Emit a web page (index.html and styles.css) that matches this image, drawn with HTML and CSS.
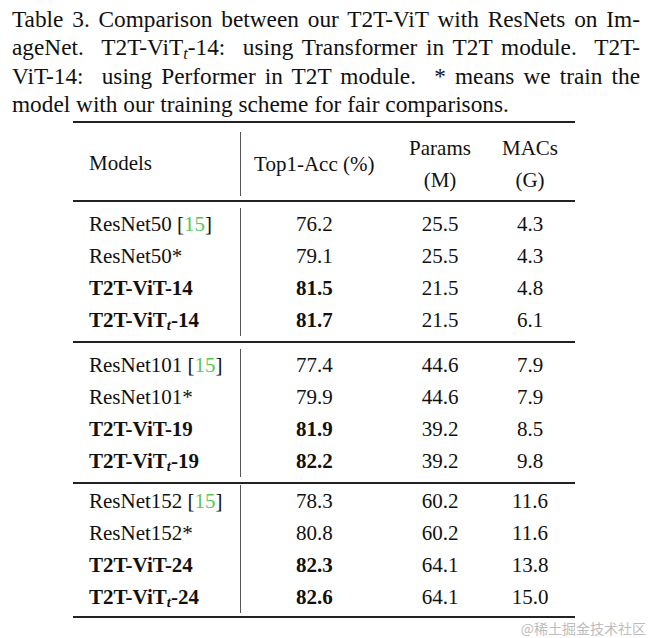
FILE: index.html
```html
<html>

<head>
	<title>Table 3</title>

	<link rel="stylesheet" href="styles.css">
</head>

<body>
	<div class="caption">
		<div class="line">Table 3. Comparison between our T2T-ViT with ResNets on Im-</div>
		<div class="line">ageNet. &nbsp;T2T-ViT<sub><i>t</i></sub>-14: &nbsp;using Transformer in T2T module. &nbsp;T2T-</div>
		<div class="line">ViT-14: &nbsp;using Performer in T2T module. &nbsp;* means we train the</div>
		<div class="line last">model with our training scheme for fair comparisons.</div>
	</div>

	<table class="results">
		<colgroup>
			<col class="c-model">
			<col class="c-acc">
			<col class="c-params">
			<col class="c-macs">
		</colgroup>
		<thead>
			<tr class="gap head-top"><td class="name"></td><td></td><td></td><td></td></tr>
			<tr class="head">
				<td class="name">Models</td>
				<td>Top1-Acc (%)</td>
				<td>Params<br>(M)</td>
				<td>MACs<br>(G)</td>
			</tr>
			<tr class="gap head-bottom"><td class="name"></td><td></td><td></td><td></td></tr>
		</thead>
		<tbody>
			<tr class="gap top"><td class="name"></td><td></td><td></td><td></td></tr>
			<tr><td class="name">ResNet50 [<span class="cite">15</span>]</td><td>76.2</td><td>25.5</td><td>4.3</td></tr>
			<tr><td class="name">ResNet50*</td><td>79.1</td><td>25.5</td><td>4.3</td></tr>
			<tr class="bold"><td class="name">T2T-ViT-14</td><td>81.5</td><td>21.5</td><td>4.8</td></tr>
			<tr class="bold"><td class="name">T2T-ViT<sub><i>t</i></sub>-14</td><td>81.7</td><td>21.5</td><td>6.1</td></tr>
			<tr class="gap bottom"><td class="name"></td><td></td><td></td><td></td></tr>
		</tbody>
		<tbody>
			<tr class="gap top"><td class="name"></td><td></td><td></td><td></td></tr>
			<tr><td class="name">ResNet101 [<span class="cite">15</span>]</td><td>77.4</td><td>44.6</td><td>7.9</td></tr>
			<tr><td class="name">ResNet101*</td><td>79.9</td><td>44.6</td><td>7.9</td></tr>
			<tr class="bold"><td class="name">T2T-ViT-19</td><td>81.9</td><td>39.2</td><td>8.5</td></tr>
			<tr class="bold"><td class="name">T2T-ViT<sub><i>t</i></sub>-19</td><td>82.2</td><td>39.2</td><td>9.8</td></tr>
			<tr class="gap bottom"><td class="name"></td><td></td><td></td><td></td></tr>
		</tbody>
		<tbody>
			<tr class="gap thin"><td class="name"></td><td></td><td></td><td></td></tr>
			<tr><td class="name">ResNet152 [<span class="cite">15</span>]</td><td>78.3</td><td>60.2</td><td>11.6</td></tr>
			<tr><td class="name">ResNet152*</td><td>80.8</td><td>60.2</td><td>11.6</td></tr>
			<tr class="bold"><td class="name">T2T-ViT-24</td><td>82.3</td><td>64.1</td><td>13.8</td></tr>
			<tr class="bold"><td class="name">T2T-ViT<sub><i>t</i></sub>-24</td><td>82.6</td><td>64.1</td><td>15.0</td></tr>
			<tr class="gap thin-bottom"><td class="name"></td><td></td><td></td><td></td></tr>
		</tbody>
	</table>

	<div class="mark">@稀土掘金技术社区</div>
</body>

</html>
```

FILE: styles.css
```css
body {
	margin: 0;
	background-color: #ffffff;
	color: #111111;
	font-family: "Liberation Serif", "Times New Roman", serif;
}

.caption {
	padding: 5px 12px 0 12px;
	font-size: 23.3px;
	line-height: 28.3px;
}

.line {
	text-align: justify;
	text-align-last: justify;
	white-space: nowrap;
}

.line.last {
	text-align: left;
	text-align-last: left;
}

sub {
	font-size: 0.7em;
	vertical-align: -0.22em;
	line-height: 0;
}

.results {
	border-collapse: collapse;
	table-layout: fixed;
	width: 502px;
	margin: 3px 0 0 73px;
	font-size: 21px;
	border-bottom: 2px solid #222222;
}

.results thead,
.results tbody {
	border-top: 2px solid #222222;
}

.c-model { width: 167px; }
.c-acc { width: 148px; }
.c-params { width: 104px; }
.c-macs { width: 83px; }

.results td {
	padding: 0;
	height: 32px;
	line-height: 32px;
	text-align: center;
	vertical-align: middle;
}

.results td.name {
	text-align: left;
	padding-left: 16px;
	border-right: 1px solid #555555;
}

.results td:last-child {
	padding-right: 7px;
}

.results .head td {
	height: 62px;
	line-height: 32px;
}

.results .head td.name {
	padding-bottom: 3px;
}

.results .gap td {
	height: 8px;
	line-height: 0;
	font-size: 0;
	border-right: none;
}

.results .gap.head-top td { height: 10px; }
.results .gap.head-bottom td { height: 5px; }
.results .gap.top td { height: 7px; }
.results .gap.bottom td { height: 6px; }
.results .gap.thin td { height: 2px; }
.results .gap.thin-bottom td { height: 4px; }

.bold td:nth-child(-n+2) {
	font-weight: bold;
}

.cite {
	color: #55c855;
}

.mark {
	text-align: right;
	padding: 1px 6px 0 0;
	font-family: "Noto Sans CJK SC", sans-serif;
	font-size: 14px;
	line-height: 18px;
	color: #bdbdbd;
}
```
